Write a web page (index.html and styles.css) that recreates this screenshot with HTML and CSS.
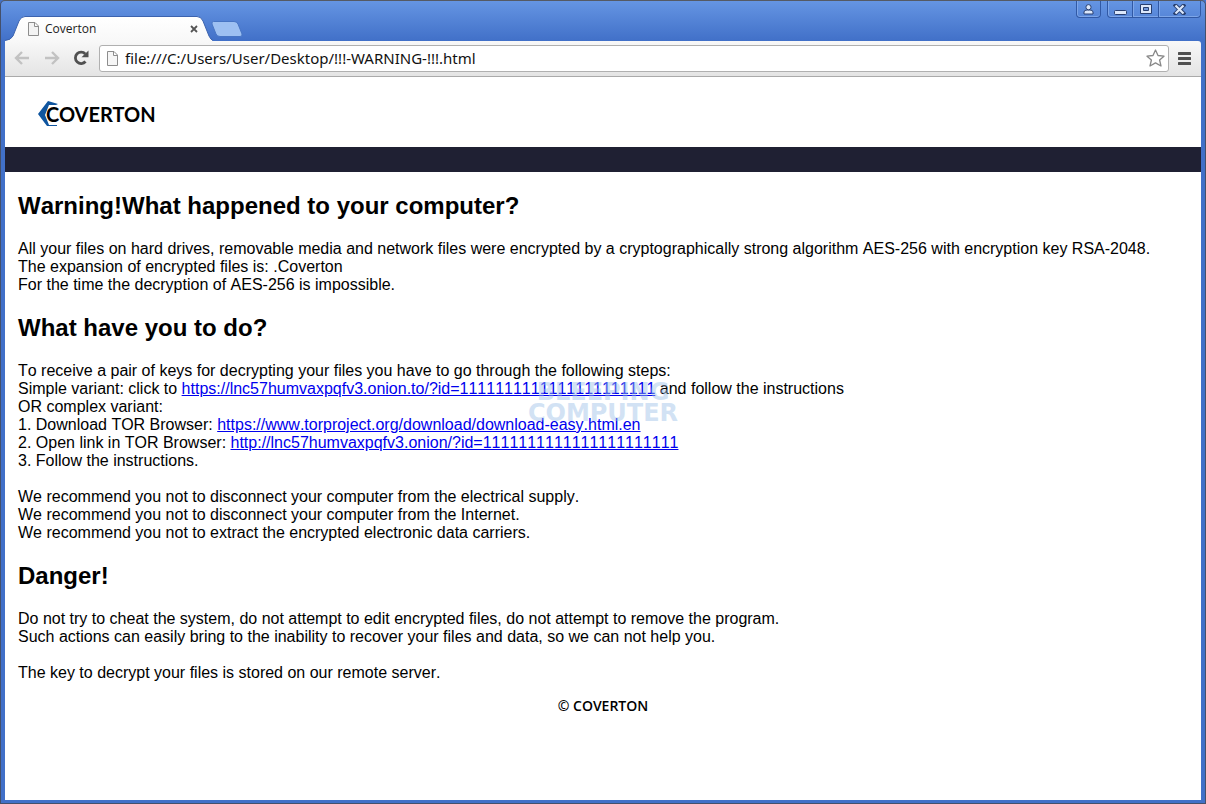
FILE: index.html
```html
<!DOCTYPE html>
<html lang="en">
<head>
<meta charset="utf-8">
<title>Coverton</title>
<link rel="stylesheet" href="styles.css">
</head>
<body>
<div class="window">
  <div class="titlebar">
    <div class="tabs">
      <svg class="tab-shape" width="208" height="25" viewBox="0 0 208 25" aria-hidden="true">
        <defs><linearGradient id="tabfill" x1="0" y1="0" x2="0" y2="1"><stop offset="0" stop-color="#fff"/><stop offset="1" stop-color="#f8f8f8"/></linearGradient></defs>
        <path d="M0 25V24.500Q6 24 8 20L14 5Q16 .5 20 .5H192Q196 .5 198 5L204 20Q206 24 208 25Z" fill="url(#tabfill)"/>
        <path d="M0 24.500Q6 24 8 20L14 5Q16 .5 20 .5H192Q196 .5 198 5L204 20Q206 24 208 24.500" fill="none" stroke="#3c63ae"/>
      </svg>
      <div class="tab">
        <svg class="tab-icon" width="11" height="14" viewBox="0 0 11 14" aria-hidden="true"><path d="M.5.500H7L10.500 4V13.500H.5ZM6.500.500V4.500H10.500" fill="#f3f3f3" stroke="#8d8d8d"/></svg>
        <span class="tab-title">Coverton</span>
        <button class="tab-close" aria-label="Close tab"><svg width="8" height="8" viewBox="0 0 8 8"><path d="M1 1L7 7M7 1L1 7" stroke="#555" stroke-width="1.800"/></svg></button>
      </div>
      <button class="new-tab" aria-label="New tab"><svg width="32" height="16" viewBox="0 0 32 16"><path d="M2.500.500H23Q26 .5 27 3L31 13Q31.500 15.500 29 15.500H9Q6 15.500 5 13L1 3Q.5.500 2.500.500Z" fill="#9dc0f2" stroke="#4775c4"/></svg></button>
    </div>
    <div class="controls">
      <button class="control user" aria-label="User"><svg width="11" height="11" viewBox="0 0 11 11"><path d="M1 10V8Q1 6 4 6H7Q10 6 10 8V10Z" fill="#dce8fb" stroke="#283f70"/><circle cx="5.500" cy="3.200" r="2.600" fill="#dce8fb" stroke="#283f70"/></svg></button>
      <div class="control-group">
        <button class="control" aria-label="Minimize"><svg width="13" height="11" viewBox="0 0 13 11"><rect x=".5" y="6.500" width="12" height="4" rx="1" fill="#dce8fb" stroke="#283f70"/></svg></button>
        <button class="control" aria-label="Maximize"><svg width="12" height="11" viewBox="0 0 12 11"><path d="M.5.500H11.500V9.500H.5Z" fill="#dce8fb" stroke="#283f70"/><path d="M3.500 3.500H8.500V6.500H3.500Z" fill="#7299dd" stroke="#283f70"/></svg></button>
        <button class="control close" aria-label="Close"><svg width="13" height="11" viewBox="0 0 13 11"><path d="M2.500 1.500L10.500 9.500M10.500 1.500L2.500 9.500" stroke="#283f70" stroke-width="4" stroke-linecap="square"/><path d="M2.500 1.500L10.500 9.500M10.500 1.500L2.500 9.500" stroke="#dce8fb" stroke-width="2.200"/></svg></button>
      </div>
    </div>
  </div>
  <div class="toolbar">
    <button class="tool back" aria-label="Back"><svg width="16" height="14" viewBox="0 0 16 14"><path d="M8 1L2 7L8 13M2 7H15" fill="none" stroke="#c2c2c2" stroke-width="2.400"/></svg></button>
    <button class="tool forward" aria-label="Forward"><svg width="16" height="14" viewBox="0 0 16 14"><path d="M8 1L14 7L8 13M14 7H1" fill="none" stroke="#c2c2c2" stroke-width="2.400"/></svg></button>
    <button class="tool reload" aria-label="Reload"><svg width="16" height="16" viewBox="0 0 16 16"><path d="M12.500 11.500A5.700 5.700 0 1 1 12.300 4" fill="none" stroke="#505050" stroke-width="2.800"/><path d="M15.500.500V7.300H8.500Z" fill="#505050"/></svg></button>
    <div class="address">
      <svg class="page-icon" width="11" height="15" viewBox="0 0 11 15" aria-hidden="true"><path d="M.5.500H7L10.500 4V14.500H.5ZM6.500.500V4.500H10.500" fill="#f6f6f6" stroke="#8d8d8d"/></svg>
      <input class="url" type="text" aria-label="Address" value="file:///C:/Users/User/Desktop/!!!-WARNING-!!!.html">
      <button class="star" aria-label="Bookmark"><svg width="19" height="18" viewBox="0 0 19 18"><path d="M9.500 1L12 6.500L18 7.200L13.600 11L15 17L9.500 13.900L4 17L5.400 11L1 7.200L7 6.500Z" fill="#fff" stroke="#888" stroke-width="1.300" stroke-linejoin="round"/></svg></button>
    </div>
    <button class="tool menu" aria-label="Menu"><svg width="13" height="13" viewBox="0 0 13 13"><path d="M1 1.500H12M1 6.500H12M1 11.500H12" stroke="#505050" stroke-width="3" stroke-linecap="round"/></svg></button>
  </div>
  <div class="page">
    <header class="site-header">
      <svg class="logo-mark" width="20" height="25" viewBox="0 0 20 25" aria-hidden="true"><path d="M20 3L10 0L0 13L9 25H19V24H11L7 14L11 4H18Z" fill="#0f559f"/></svg>
      <span class="logo-text">COVERTON</span>
    </header>
    <div class="band"></div>
    <main class="content">
      <h1>Warning!What happened to your computer?</h1>
      <p>All your files on hard drives, removable media and network files were encrypted by a cryptographically strong algorithm AES-256 with encryption key RSA-2048.<br>
      The expansion of encrypted files is: .Coverton<br>
      For the time the decryption of AES-256 is impossible.</p>
      <h1>What have you to do?</h1>
      <div class="steps">
        <p>To receive a pair of keys for decrypting your files you have to go through the following steps:<br>
        Simple variant: click to <a href="#simple">https://lnc57humvaxpqfv3.onion.to/?id=1111111111111111111111</a> and follow the instructions<br>
        OR complex variant:<br>
        1. Download TOR Browser: <a href="#download">https://www.torproject.org/download/download-easy.html.en</a><br>
        2. Open link in TOR Browser: <a href="#open">http://lnc57humvaxpqfv3.onion/?id=1111111111111111111111</a><br>
        3. Follow the instructions.<br><br>
        We recommend you not to disconnect your computer from the electrical supply.<br>
        We recommend you not to disconnect your computer from the Internet.<br>
        We recommend you not to extract the encrypted electronic data carriers.</p>
        <div class="watermark"><span>BLEEPING</span><span>COMPUTER</span></div>
      </div>
      <h1>Danger!</h1>
      <p>Do not try to cheat the system, do not attempt to edit encrypted files, do not attempt to remove the program.<br>
      Such actions can easily bring to the inability to recover your files and data, so we can not help you.<br><br>
      The key to decrypt your files is stored on our remote server.</p>
    </main>
    <footer class="footer">© COVERTON</footer>
  </div>
</div>
</body>
</html>
```
FILE: styles.css
```css
* { box-sizing: border-box; }
body { margin: 0; background: #4372c9; }
button { margin: 0; padding: 0; border: 0; background: none; display: flex; align-items: center; justify-content: center; }
svg { display: block; flex: none; }

.window {
  display: flex;
  flex-direction: column;
  min-height: 100vh;
  padding: 0 4px 3px;
  border: 1px solid #44506b;
  border-top-color: #555a64;
  border-radius: 5px 5px 0 0;
  background: linear-gradient(#6595e3, #4170c8 40px);
}

.titlebar { display: flex; justify-content: space-between; height: 40px; }
.tabs { display: grid; grid-template-columns: 206px 32px; align-self: flex-end; }
.tab-shape { grid-area: 1 / 1; }
.tab { grid-area: 1 / 1; display: flex; align-items: center; padding: 0 11px 0 23px; gap: 6px; }
.tab-title { flex: 1; font: 12px/16px "Open Sans", "Noto Sans", sans-serif; color: #222; }
.tab-close { width: 12px; height: 12px; }
.new-tab { align-self: center; }

.controls { display: flex; gap: 6px; }
.control-group { display: flex; }
.control {
  width: 26px;
  height: 17px;
  border: 1px solid #3159a5;
  border-top: 0;
  box-shadow: inset 1px 0 #7ea6e8, inset 0 -1px #7ea6e8;
}
.control + .control { border-left: 0; }
.control.user { width: 25px; border-radius: 0 0 4px 4px; }
.control:first-child { border-bottom-left-radius: 4px; }
.control.close { width: 42px; border-bottom-right-radius: 4px; }

.toolbar {
  display: flex;
  align-items: center;
  height: 36px;
  padding: 0 10px 1px 9px;
  border-bottom: 1px solid #aaa;
  border-top-right-radius: 3px;
  background: linear-gradient(#f8f8f8, #e4e4e4);
}
.tool { flex: none; }
.forward { margin-left: 14px; }
.reload { margin-left: 13px; }
.address {
  display: flex;
  flex: 1;
  align-items: center;
  height: 27px;
  margin: 0 9px 0 10px;
  padding: 0 3px 0 7px;
  border: 1px solid #b0b0b0;
  border-radius: 3px;
  background: #fff;
}
.url { flex: 1; min-width: 0; height: 24px; margin: 0; padding: 0 0 0 7px; border: 0; outline: 0; background: none; font: 15px/24px "Noto Sans", "Open Sans", sans-serif; color: #111; }

.page { flex: 1; background: #fff; font: 16px/18px "Liberation Sans", Arial, sans-serif; font-kerning: none; color: #000; }
.site-header { display: flex; align-items: center; height: 70px; padding: 3px 33px 0; }
.logo-text { margin-left: -12px; font: bold 20px/24px Lato, sans-serif; }
.band { height: 25px; background: #1f2033; }
.content { padding: 20px 13px 0; }
h1 { margin: 0 0 20px; font-size: 24px; line-height: 28px; }
p { margin: 0 0 20px; }
a { color: #0000ee; }
.steps { position: relative; }
.watermark {
  position: absolute;
  top: 20px;
  left: 495px;
  display: flex;
  flex-direction: column;
  align-items: center;
  width: 180px;
  font: bold 24px/21px "DejaVu Sans", sans-serif;
  color: #9dbfe8;
  opacity: 0.45;
  pointer-events: none;
}
.footer { margin-top: -5px; text-align: center; font: 600 14px/18px "Open Sans", "Noto Sans", sans-serif; }
```
